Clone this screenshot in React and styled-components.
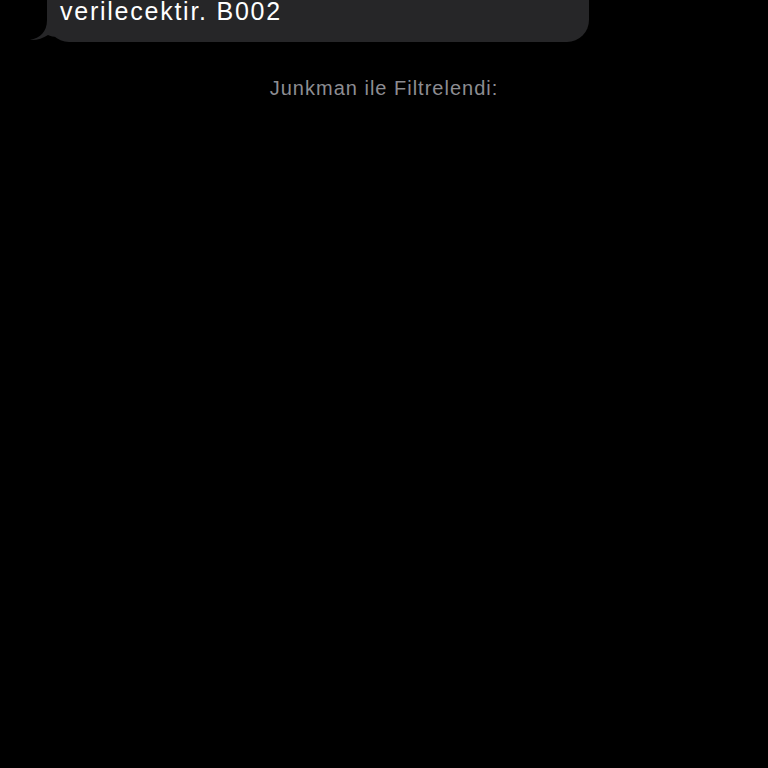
import React from 'react'
import styled, { createGlobalStyle } from 'styled-components'

/**Page defaults: black background, no body margin */
const GlobalStyle = createGlobalStyle`
    html, body {
        margin: 0;
        padding: 0;
        background: #000;
    }
    body {
        font-family: "Liberation Sans", Arial, sans-serif;
        -webkit-font-smoothing: antialiased;
    }
`;

function App() {
    return (
        <Screen>
            <GlobalStyle />
            <Thread>
                <Bubble>
                    <Tail viewBox="0 0 30 22" width="30" height="22">
                        <path
                            d="M19 0 C19 12 12 18 2 20 C8 20.5 15 18.5 20 15 C22 16 26 17 30 17 L30 0 Z"
                            fill="#262628"
                        />
                    </Tail>
                    <Text>verilecektir. B002</Text>
                </Bubble>
            </Thread>
            <FilterNote>Junkman ile Filtrelendi:</FilterNote>
        </Screen>
    )
}

const Screen = styled.div`
    width: 768px;
    height: 768px;
    overflow: hidden;
    background: #000;
`;

const Thread = styled.div`
    display: flex;
    padding-left: 47px;
`;

/**The bubble top runs off the top of the screenshot */
const Bubble = styled.div`
    position: relative;
    width: 542px;
    box-sizing: border-box;
    margin-top: -24px;
    padding: 20px 14px 16px 13px;
    background: #262628;
    border-radius: 22px;
`;

const Tail = styled.svg`
    position: absolute;
    left: -19px;
    bottom: 0;
    display: block;
`;

const Text = styled.div`
    position: relative;
    color: #fff;
    font-size: 25px;
    line-height: 30px;
    letter-spacing: 1.75px;
`;

const FilterNote = styled.div`
    margin-top: 34px;
    text-align: center;
    color: #8d8d92;
    font-size: 20px;
    line-height: 24px;
    letter-spacing: 1px;
`;

export default App;
